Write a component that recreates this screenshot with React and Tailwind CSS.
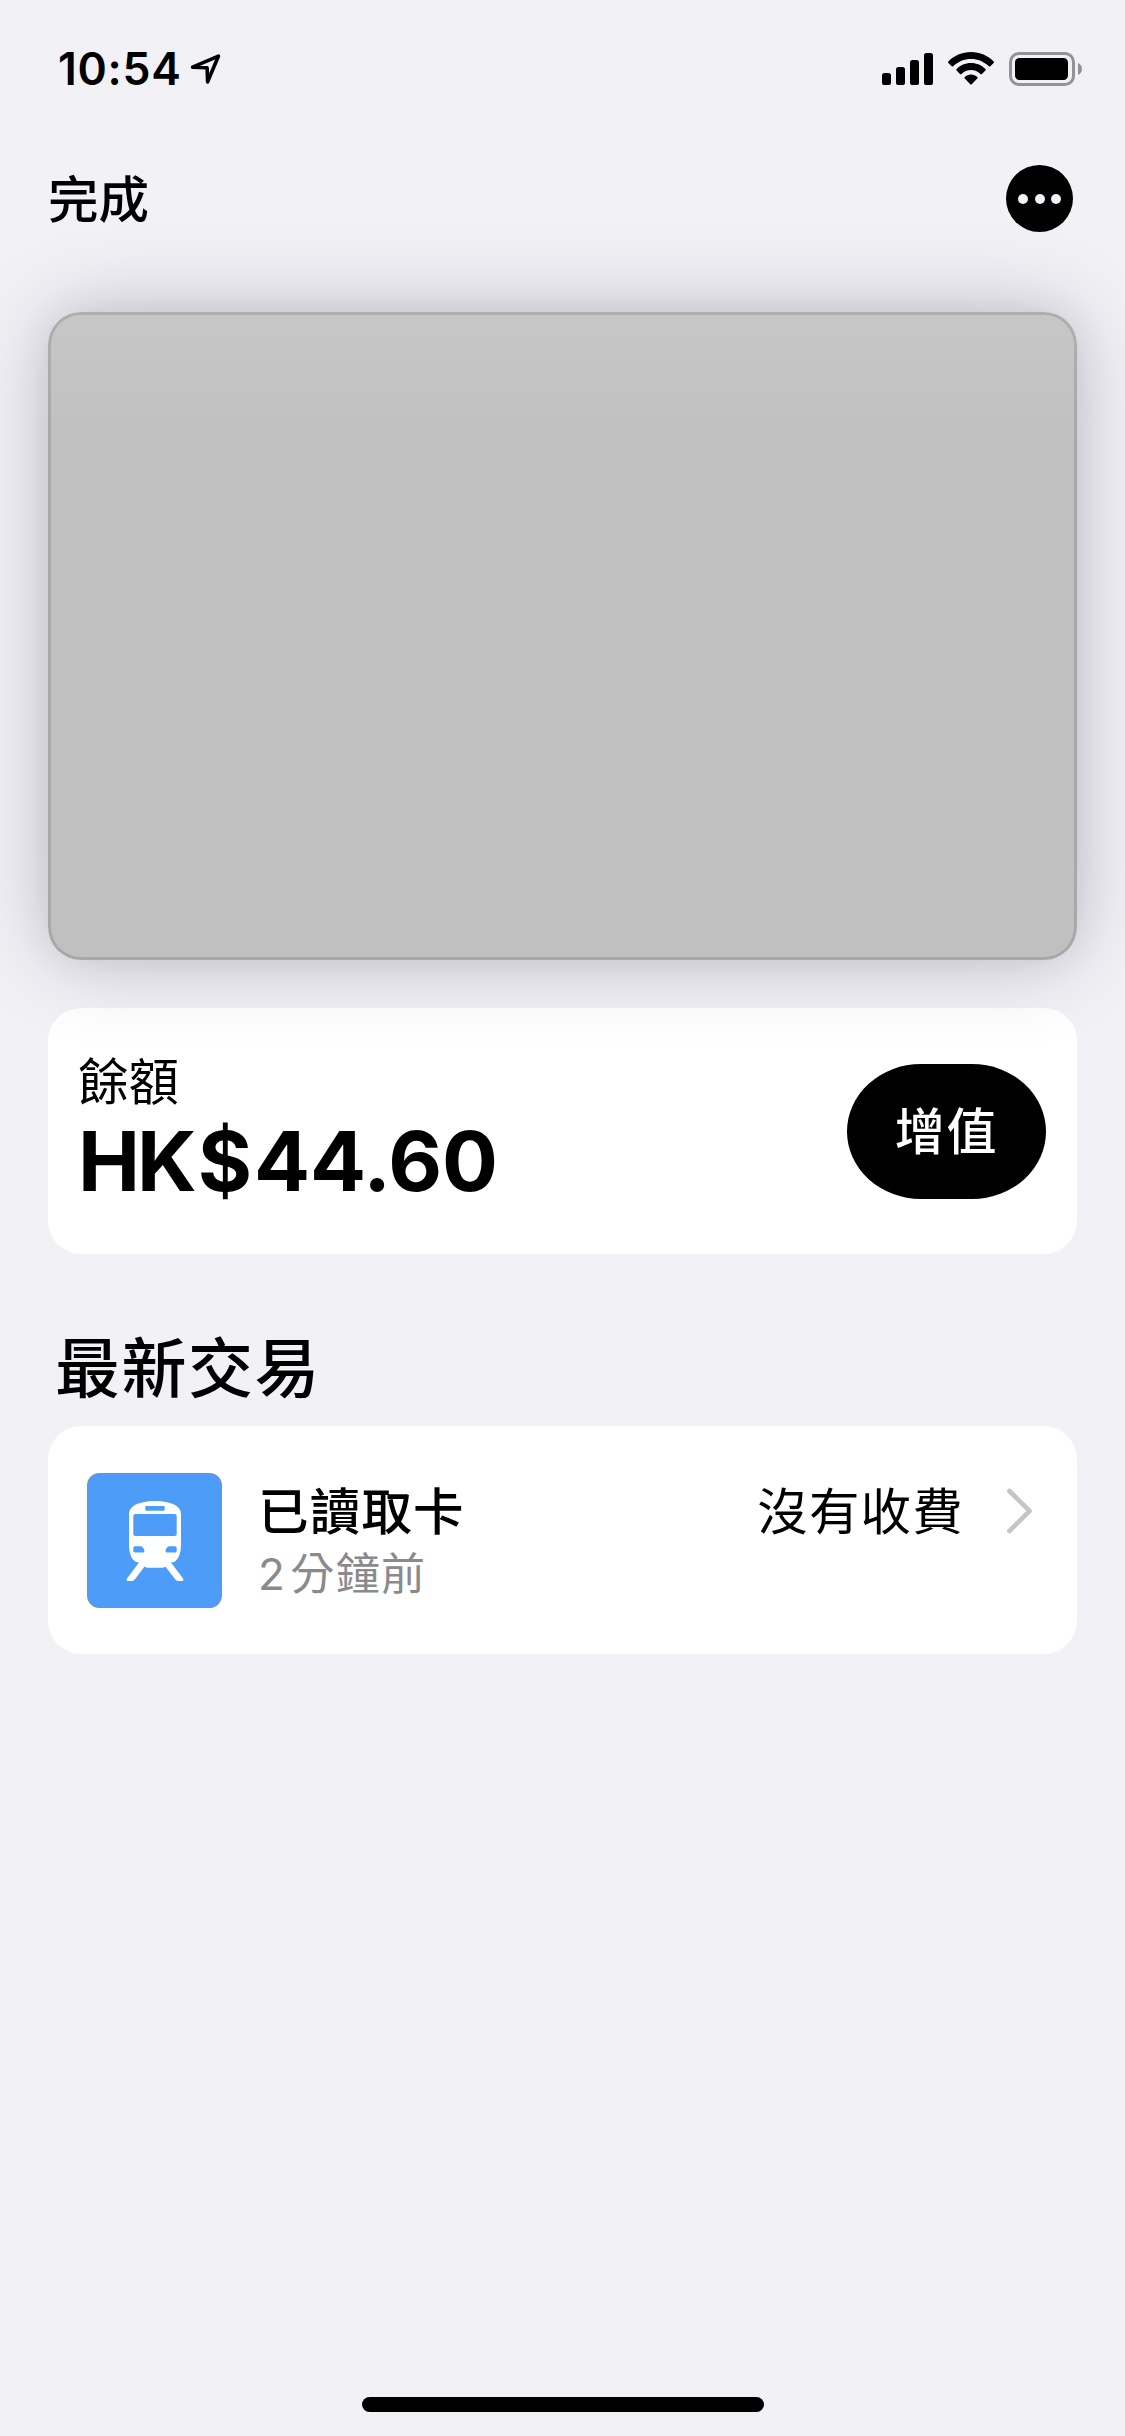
const transactions = [
  { id: 1, title: "已讀取卡", count: "2", ago: "分鐘前", amount: "沒有收費" },
];

function LocationArrow() {
  return (
    <svg className="ml-[8px] h-[32px] w-[32px]" viewBox="0 0 32 32" fill="none">
      <path d="M2.6 14.2 L28.4 3.2 L17.6 28.8 L17.1 14.8 Z" stroke="#000" strokeWidth="3.6" strokeLinejoin="round" />
    </svg>
  );
}

function SignalIcon() {
  return (
    <svg className="h-[34px] w-[51px]" viewBox="0 0 51 34">
      <rect x="0" y="21" width="9" height="12" rx="2.6" />
      <rect x="14" y="15" width="9" height="18" rx="2.6" />
      <rect x="28" y="8" width="9" height="25" rx="2.6" />
      <rect x="42" y="1" width="9" height="32" rx="2.6" />
    </svg>
  );
}

function WifiIcon() {
  return (
    <svg className="ml-[15px] h-[34px] w-[46px]" viewBox="0 0 46 34">
      <path d="M23 0 C32 0 40 3.6 45.6 9.4 C46.1 9.9 46.1 10.4 45.6 10.9 L42.3 14.2 C41.8 14.7 41.3 14.7 40.8 14.2 C36 9.6 29.8 7 23 7 C16.2 7 10 9.6 5.2 14.2 C4.7 14.7 4.2 14.7 3.7 14.2 L0.4 10.9 C-0.1 10.4 -0.1 9.9 0.4 9.4 C6 3.6 14 0 23 0 Z" />
      <path d="M23 11 C28.7 11 33.8 13.3 37.4 17 C37.9 17.5 37.9 18 37.4 18.5 L34 21.9 C33.5 22.4 33 22.4 32.5 21.9 C29.9 19.5 26.6 18 23 18 C19.4 18 16.1 19.5 13.5 21.9 C13 22.4 12.5 22.4 12 21.9 L8.6 18.5 C8.1 18 8.1 17.5 8.6 17 C12.2 13.3 17.3 11 23 11 Z" />
      <path d="M23 22.6 C25.5 22.6 27.6 23.5 29.3 25 C29.8 25.5 29.8 26 29.3 26.5 L23.7 32.3 C23.2 32.8 22.8 32.8 22.3 32.3 L16.7 26.5 C16.2 26 16.2 25.5 16.7 25 C18.4 23.5 20.5 22.6 23 22.6 Z" />
    </svg>
  );
}

function BatteryIcon() {
  return (
    <svg className="ml-[15px] h-[34px] w-[74px]" viewBox="0 0 74 34">
      <rect x="1.5" y="1.5" width="63" height="31" rx="8.5" fill="none" stroke="#939296" strokeWidth="3" />
      <rect x="6" y="6" width="53" height="22" rx="4.5" />
      <path d="M69 11 C71.6 12 73 14.4 73 17 C73 19.6 71.6 22 69 23 Z" fill="#939296" />
    </svg>
  );
}

function TrainIcon() {
  return (
    <svg className="h-[80px] w-[58px]" viewBox="0 0 58 80">
      <path
        fill="#fff"
        fillRule="evenodd"
        d="M29 0 C37 0 46 1.6 50.5 5 C54 7.6 55 10 55 14 L55 44 C55 51 53 57 49.5 60 C48.4 61 47 61.4 45 61.5 L57 77.5 C57.8 78.8 57.4 80 56 80 L52 80 C50.8 80 50 79.5 49.3 78.6 L39.4 65.6 C38.6 66.4 38 66.7 37 66.7 L21 66.7 C20 66.7 19.4 66.4 18.6 65.6 L8.7 78.6 C8 79.5 7.2 80 6 80 L2 80 C0.6 80 0.2 78.8 1 77.5 L13 61.5 C11 61.4 9.6 61 8.5 60 C5 57 3 51 3 44 L3 14 C3 10 4 7.6 7.5 5 C12 1.6 21 0 29 0 Z
        M20.5 5 Q19.3 5 19.3 6.2 V8.6 Q19.3 9.8 20.5 9.8 H37.5 Q38.7 9.8 38.7 8.6 V6.2 Q38.7 5 37.5 5 Z
        M9.3 13 Q7.3 13 7.3 15 V33 Q7.3 35 9.3 35 H48.7 Q50.7 35 50.7 33 V15 Q50.7 13 48.7 13 Z
        M9 45.3 Q7.3 45.3 7.3 47 V50 Q7.3 51.5 9 51.5 H17 Q18.6 51.5 18.4 50 C17.9 47.4 16.6 45.3 14.6 45.3 Z
        M49 45.3 Q50.7 45.3 50.7 47 V50 Q50.7 51.5 49 51.5 H41 Q39.4 51.5 39.6 50 C40.1 47.4 41.4 45.3 43.4 45.3 Z"
      />
    </svg>
  );
}

function Chevron() {
  return (
    <svg className="h-[46px] w-[26px]" viewBox="0 0 26 46" fill="none">
      <path d="M2.4 3 L22.6 23 L2.4 43" stroke="#c5c5c7" strokeWidth="4.6" strokeLinecap="round" strokeLinejoin="round" />
    </svg>
  );
}

export default function App() {
  return (
    <div
      lang="zh-Hant"
      className="flex h-[2436px] w-[1125px] flex-col overflow-hidden bg-[#f2f1f6] px-12 font-[Inter,'Noto_Sans_CJK_TC',sans-serif] text-black"
    >
      {/* status bar */}
      <div className="flex h-[138px] shrink-0 items-center justify-between">
        <div className="flex items-center pl-[10px]">
          <span className="text-[44.5px] leading-[60px] font-semibold tracking-[0.7px]">10:54</span>
          <LocationArrow />
        </div>
        <div className="-mr-[6px] flex items-center">
          <SignalIcon />
          <WifiIcon />
          <BatteryIcon />
        </div>
      </div>

      <header className="mt-[27px] flex h-[67px] shrink-0 items-center justify-between pr-1">
        <button className="pt-[2px] text-[50.5px] leading-[67px] font-medium">完成</button>
        <button className="flex h-[67px] w-[67px] items-center justify-center gap-[6.5px] rounded-full bg-black">
          <span className="h-[10px] w-[10px] rounded-full bg-[#f2f1f6]" />
          <span className="h-[10px] w-[10px] rounded-full bg-[#f2f1f6]" />
          <span className="h-[10px] w-[10px] rounded-full bg-[#f2f1f6]" />
        </button>
      </header>

      {/* card face, its shadow falls on the balance panel too */}
      <div className="relative z-10 mt-20 h-[648px] shrink-0 rounded-[33px] bg-linear-to-b from-[#c7c7c7] to-[#c0c0c0] to-[130px] shadow-[0_0_90px_rgba(10,10,40,0.2),0_0_36px_rgba(10,10,40,0.08),inset_0_0_0_3px_rgba(0,0,0,0.12)]" />

      <section className="mt-12 flex h-[246px] shrink-0 items-center justify-between rounded-[33px] bg-white pr-[31px] pl-[30px]">
        <div className="flex h-full flex-col pt-[37px]">
          <p className="text-[50.5px] leading-[73px]">餘額</p>
          <p className="-mt-[2px] flex text-[83px] leading-[90px] font-bold">
            <span className="tracking-[-3px]">HK</span>
            <span className="ml-[4px]">$</span>
            <span className="ml-[2px] tracking-[-0.2px]">44.60</span>
          </p>
        </div>
        <button className="h-[135px] w-[199px] rounded-[74px/67.5px] bg-black pt-[2px] text-[50px] leading-[133px] font-medium tracking-[1.8px] text-white">
          增值
        </button>
      </section>

      <h2 className="mt-[75px] shrink-0 pl-[7px] text-[65px] leading-[80px] font-medium tracking-[1.5px]">最新交易</h2>

      <ul className="mt-[17px] shrink-0">
        {transactions.map((item) => (
          <li key={item.id} className="flex h-[228px] rounded-[33px] bg-white pr-[44px] pl-[39px]">
            <div className="mt-[47px] flex h-[135px] w-[135px] items-center justify-center rounded-[12px] border border-[#8a8f98] bg-[#4c9cf8]">
              <TrainIcon />
            </div>
            <div className="ml-[36px] flex-1 pt-[54px]">
              <p className="text-[50.5px] leading-[63px] font-medium tracking-[1.2px]">{item.title}</p>
              <p className="flex text-[44px] leading-[62px] tracking-[1.4px] text-[#8a8a8d]">
                <span>{item.count}</span>
                <span className="ml-[4px]">{item.ago}</span>
              </p>
            </div>
            <div className="box-content flex h-[62px] items-center pt-[54px]">
              <span className="mr-[43px] pt-[1px] text-[50.5px] leading-[62px] tracking-[1.2px]">{item.amount}</span>
              <Chevron />
            </div>
          </li>
        ))}
      </ul>

      {/* home indicator */}
      <div className="mt-auto mb-6 h-[15px] w-[402px] shrink-0 self-center rounded-full bg-black" />
    </div>
  );
}
